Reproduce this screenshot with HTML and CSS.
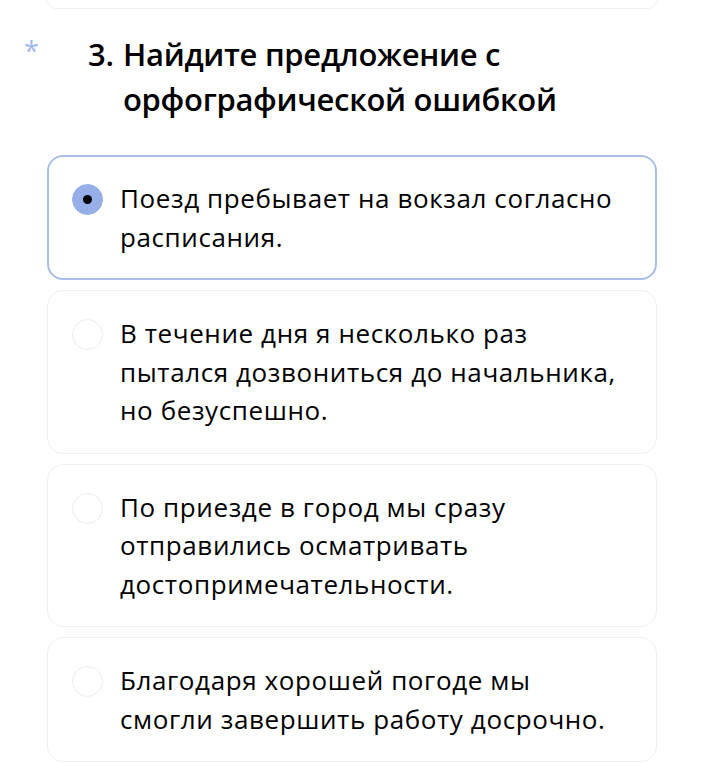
FILE: index.html
```html
<!DOCTYPE html>
<html lang="ru">
<head>
<meta charset="utf-8">
<link rel="stylesheet" href="styles.css">
</head>
<body>
<div class="prev-card"></div>
<div class="question">
  <span class="req">*</span>
  <span class="num">3.</span>
  <span class="qtext">Найдите предложение с орфографической ошибкой</span>
</div>
<div class="options">
  <label class="option selected">
    <span class="radio"><span class="dot"></span></span>
    <span class="otext">Поезд пребывает на вокзал согласно<br>расписания.</span>
  </label>
  <label class="option">
    <span class="radio"></span>
    <span class="otext">В течение дня я несколько раз<br>пытался дозвониться до начальника,<br>но безуспешно.</span>
  </label>
  <label class="option">
    <span class="radio"></span>
    <span class="otext">По приезде в город мы сразу<br>отправились осматривать<br>достопримечательности.</span>
  </label>
  <label class="option">
    <span class="radio"></span>
    <span class="otext">Благодаря хорошей погоде мы<br>смогли завершить работу досрочно.</span>
  </label>
</div>
</body>
</html>
```
FILE: styles.css
```css
html, body {
  margin: 0;
  padding: 0;
  background: #ffffff;
}
body {
  font-family: "Open Sans", "Noto Sans", sans-serif;
  color: #000000;
  width: 704px;
  height: 763px;
  overflow: hidden;
}
.prev-card {
  margin: 0 47px;
  height: 8px;
  border: 1px solid #f0f0f2;
  border-top: none;
  border-radius: 0 0 14px 14px;
}
.question {
  display: flex;
  padding: 23px 47px 0 24px;
  margin-bottom: 33px;
}
.req {
  flex: none;
  width: 64px;
  color: #a2b7ea;
  font-size: 27px;
  line-height: 1;
  padding-top: 5px;
}
.num, .qtext {
  font-size: 31px;
  font-weight: 600;
  line-height: 45px;
  letter-spacing: -0.3px;
}
.num {
  flex: none;
  width: 35px;
}
.options {
  display: flex;
  flex-direction: column;
  gap: 10px;
  padding: 0 47px;
}
.option {
  display: flex;
  align-items: flex-start;
  gap: 17px;
  border: 1px solid #f0f0f2;
  border-radius: 16px;
  padding: 23px 24px;
}
.option.selected {
  border: 2px solid #a9bfe9;
  padding: 22px 23px;
}
.radio {
  flex: none;
  width: 29px;
  height: 29px;
  margin-top: 5px;
  border: 1px solid #ececee;
  border-radius: 50%;
  display: flex;
  align-items: center;
  justify-content: center;
}
.selected .radio {
  background: #96afe8;
  border-color: #96afe8;
}
.dot {
  width: 9px;
  height: 9px;
  border-radius: 50%;
  background: #000000;
}
.otext {
  font-size: 26px;
  line-height: 38.5px;
  letter-spacing: 0.6px;
  white-space: nowrap;
}
```
